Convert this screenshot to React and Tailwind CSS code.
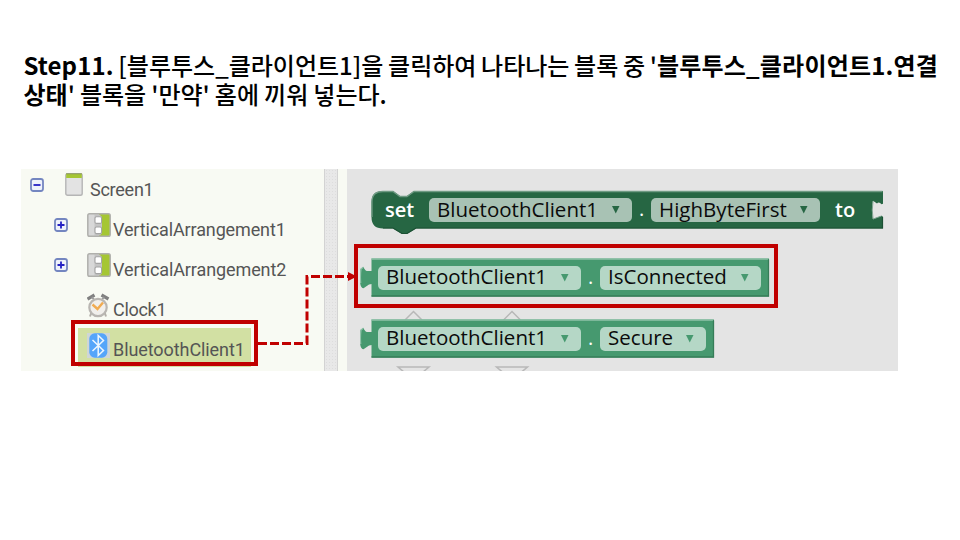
function Toggle({ open }) {
  return (
    <svg width="14" height="14" viewBox="0 0 14 14" className="shrink-0">
      <rect x="1" y="1" width="12" height="12" rx="2.2" fill="#eef2fb" stroke="#7486c0" strokeWidth="1.8" />
      <path d={open ? 'M3.5 7H10.5' : 'M3.5 7H10.5M7 3.5V10.5'} stroke="#2420c4" strokeWidth="1.8" />
    </svg>
  );
}

function ScreenIcon() {
  return (
    <svg width="18" height="23" viewBox="0 0 18 23" className="shrink-0">
      <rect x="0.8" y="0.8" width="16.4" height="21.4" rx="1.8" fill="#e3e3e3" stroke="#b5b5b5" strokeWidth="1.4" />
      <path d="M1.2 1H16.8V5H1.2Z" fill="#a5c633" />
      <path d="M1 0.8H17" stroke="#8c9c58" />
    </svg>
  );
}

function ArrangementIcon() {
  return (
    <svg width="24" height="24" viewBox="0 0 24 24" className="shrink-0">
      <path d="M1 1H12V23H1Z" fill="#d8d8d8" />
      <path d="M12 1H23V23H12Z" fill="#a5c633" />
      <path d="M7.500 1.500H12.500L15 4V20L13 22.500H7.500Z" fill="#c4c4c4" />
      <rect x="0.8" y="0.8" width="22.4" height="22.4" rx="1.8" fill="none" stroke="#b0b0ac" strokeWidth="1.500" />
      <rect x="8" y="3.8" width="6.600" height="6.600" rx="1.5" fill="#fff" stroke="#a4a4a4" strokeWidth="1.1" />
      <rect x="8" y="14" width="6.600" height="6.600" rx="1.5" fill="#fff" stroke="#a4a4a4" strokeWidth="1.1" />
    </svg>
  );
}

function ClockIcon() {
  return (
    <svg width="24" height="25" viewBox="0 0 24 25" className="shrink-0">
      <path d="M4.500 19L3 23.500M17.500 19L19 23.500" stroke="#b4b0aa" strokeWidth="2" />
      <path d="M0.500 6L7.500 2M14.500 2L21.500 6" stroke="#808080" strokeWidth="3.2" />
      <path d="M5 4L7.500 7.500M17 4L14.500 7.500" stroke="#999" strokeWidth="1.8" />
      <circle cx="11" cy="14.500" r="8.700" fill="#f1efec" stroke="#b9b6b2" strokeWidth="2.2" />
      <path d="M5.500 11.500L10.500 16L16 9.500" fill="none" stroke="#f0ab52" strokeWidth="2.4" />
    </svg>
  );
}

function BluetoothIcon() {
  return (
    <svg width="23" height="25" viewBox="0 0 23 25" className="shrink-0">
      <rect width="23" height="25" fill="#cfd6d6" />
      <rect x="2.3" y="0.3" width="18" height="24.4" rx="5.5" fill="#55a5fa" />
      <path d="M5.5 7L16.5 17.5L11.2 22.5V2.5L16.5 7.5L5.5 18" fill="none" stroke="#edf6ff" strokeWidth="1.5" />
    </svg>
  );
}

function TreeRow({ label, icon, toggle, root, selected, tracking }) {
  return (
    <div className={`flex h-10 w-[303px] ${root ? 'pl-[9px]' : 'pl-[33px]'}`}>
      <div className="w-6 shrink-0 pt-[10px]">{toggle}</div>
      <div className={`flex h-[39px] ${selected ? 'w-[173px] bg-[#d2e0a3]' : ''}`}>
        <div className={`shrink-0 pt-[5px] ${root ? 'w-9 pl-[11px]' : 'w-[35px] pl-[9px]'}`}>{icon}</div>
        <span className={`whitespace-nowrap pt-[10px] font-[Roboto,sans-serif] text-[18px] leading-6 text-[#555] ${tracking}`}>{label}</span>
      </div>
    </div>
  );
}

function Pill({ text, width, tone, leading, arrow }) {
  return (
    <span className={`flex h-6 shrink-0 items-start justify-between rounded-[5px] pl-[8px] pr-[11px] ${width} ${tone}`}>
      <span className={`whitespace-nowrap font-["Open_Sans",sans-serif] text-[20.5px] tracking-[0.02px] text-[#0b0b0b] ${leading}`}>{text}</span>
      <svg width="10" height="8" viewBox="0 0 10 8" className="mt-[8px] shrink-0"><path d="M1 0H8.500L4.750 7.500Z" fill={arrow} /></svg>
    </span>
  );
}

function Dot() {
  return <span className="w-[19px] shrink-0 pl-[7px] font-['Open_Sans',sans-serif] text-[20px] leading-[22px] text-white">.</span>;
}

function SetterBlock() {
  return (
    <div className="relative flex h-[44px] w-[513px] items-start pl-[14px] pt-[8px]">
      <svg width="513" height="46" viewBox="0 0 513 46" className="absolute left-0 top-0">
        <path d="M12 1H22L29 6H36L43 1H512V13.700L510.500 14.300Q508 11 506 13.500L502 10.700Q500 20 502 29.300L510.500 25.700L512 26.700V38.500H45L36 44H31L22 38.500H12Q0.500 38.500 0.500 27V12Q0.500 1 12 1Z" fill="#266643" />
        <path d="M1 27V12Q1 1.500 12 1.500H22L29 6.500H36L43 1.500H511.500" fill="none" stroke="#6f9a83" strokeWidth="1.3" />
        <path d="M12 38H22L31 43.500H36L45 38H511.500V27" fill="none" stroke="#1c5034" strokeWidth="1.2" />
        <path d="M502 11Q500.500 20 502 29L510.500 26" fill="none" stroke="#7ea38f" strokeWidth="1" />
      </svg>
      <span className="relative w-[44px] shrink-0 font-['Open_Sans',sans-serif] text-[20px] font-semibold leading-[23px] text-white">set</span>
      <div className="relative flex">
        <Pill text="BluetoothClient1" width="w-[203px]" tone="bg-[#a8c2b4]" arrow="#266643" leading="leading-[22px]" />
        <Dot />
        <Pill text="HighByteFirst" width="w-[169px]" tone="bg-[#a8c2b4]" arrow="#266643" leading="leading-[22px]" />
        <span className="pl-[15px] font-['Open_Sans',sans-serif] text-[20px] font-semibold leading-[23px] text-white">to</span>
      </div>
    </div>
  );
}

function GetterBlock({ prop, width, pillWidth, w }) {
  return (
    <div className={`relative flex h-[39px] items-start pl-[18px] pt-[8px] ${width}`}>
      <svg width={w} height="39" viewBox={`0 0 ${w} 39`} className="absolute left-0 top-0">
        <path d={`M11.500 0.500H${w - 1}V38.500H11.500V26L9 26.500L3.500 30.300Q1 30 0.300 26Q-0.500 19 0.500 11L3.300 8.700Q5 12.700 7 13H11.500Z`} fill="#46996f" />
        <path d={`M11.500 1H${w - 2}M0.700 25Q0 18 1 11L3.300 9.300`} fill="none" stroke="#90c2a9" strokeWidth="1.3" />
        <path d={`M11.500 38H${w - 1.5}V1.500`} fill="none" stroke="#367d58" strokeWidth="1.3" />
      </svg>
      <div className="relative flex">
        <Pill text="BluetoothClient1" width="w-[203px]" tone="bg-[#b5d7c6]" arrow="#46996f" leading="leading-[20px]" />
        <Dot />
        <Pill text={prop} width={pillWidth} tone="bg-[#b5d7c6]" arrow="#46996f" leading="leading-[20px]" />
      </div>
    </div>
  );
}

export default function App() {
  return (
    <div className="relative h-[540px] w-[960px] overflow-hidden bg-white pt-[50px]">
      <h1 className="ml-[23.5px] h-[119px] whitespace-nowrap font-['Noto_Sans_CJK_KR',sans-serif] text-[24px] font-medium leading-[29px] text-black">
        <span className="[word-spacing:-0.7px]">
          <b className="tracking-[0.1px]">Step11.</b> [블루투스_클라이언트1]을 클릭하여 나타나는 블록 중 '<b className="tracking-[0.2px]">블루투스_클라이언트1.연결</b>
        </span>
        <br />
        <span className="[word-spacing:-0.3px]">
          <b>상태</b>' 블록을 '만약' 홈에 끼워 넣는다.
        </span>
      </h1>

      <div className="ml-[21px] flex h-[202px] w-[877px] overflow-hidden">
        <div className="-mt-px w-[303px] shrink-0 bg-[#f8faf3]">
          <TreeRow root label="Screen1" icon={<ScreenIcon />} toggle={<Toggle open />} tracking="tracking-[-0.25px]" />
          <TreeRow label="VerticalArrangement1" icon={<ArrangementIcon />} toggle={<Toggle />} tracking="tracking-[-0.13px]" />
          <TreeRow label="VerticalArrangement2" icon={<ArrangementIcon />} toggle={<Toggle />} tracking="tracking-[-0.1px]" />
          <TreeRow label="Clock1" icon={<ClockIcon />} tracking="tracking-[-0.3px]" />
          <TreeRow label="BluetoothClient1" icon={<BluetoothIcon />} selected tracking="tracking-[-0.08px]" />
          <div className="h-[4px]" />
        </div>
        <div className="w-[14px] shrink-0 border-x border-[#d3d3d3] bg-[#e8e8e8] bg-[radial-gradient(#dddddd_0.7px,transparent_0.9px)] bg-[size:3px_3px]" />
        <div className="w-[9px] shrink-0 bg-[#f8faf3]" />
        <div className="relative w-[551px] shrink-0 bg-[#e4e4e4] pl-[13px] pt-[21px]">
          <svg width="551" height="202" viewBox="0 0 551 202" className="absolute left-0 top-0" fill="none" stroke="#b8b8b8" strokeWidth="1.500">
            <path d="M58 151L66.500 142.500L75 151M156.500 151L165 142.500L173.500 151" />
            <path d="M51 198H82L66.500 211ZM149.500 198H180.500L165 211Z" />
          </svg>
          <div className="relative flex flex-col items-start">
            <div className="mb-6 ml-[11px]"><SetterBlock /></div>
            <div className="mb-[22px]"><GetterBlock prop="IsConnected" width="w-[410px]" pillWidth="w-[161px]" w={410} /></div>
            <GetterBlock prop="Secure" width="w-[355px]" pillWidth="w-[106px]" w={355} />
          </div>
        </div>
      </div>

      <div className="absolute left-[71px] top-[320px] h-[46px] w-[187px] border-4 border-[#c00000]" />
      <div className="absolute left-[354px] top-[244px] h-[64px] w-[424px] border-4 border-[#c00000]" />
      <svg width="100" height="80" viewBox="0 0 100 80" className="absolute left-[258px] top-[270px]">
        <path d="M0 73.500H49V6.500H92" fill="none" stroke="#c00000" strokeWidth="3" strokeDasharray="9 3" />
        <path d="M90 2L99 6.500L90 11Z" fill="#c00000" />
      </svg>
    </div>
  );
}
